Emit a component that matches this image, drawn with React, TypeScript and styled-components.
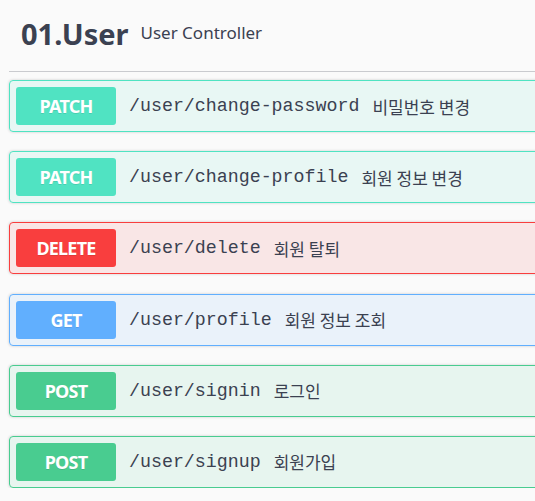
import React from "react";
import styled, { createGlobalStyle } from "styled-components";

const Global = createGlobalStyle`
  html, body {
    margin: 0;
    padding: 0;
    background: #fafafa;
    overflow: hidden;
  }
  body {
    font-family: "Noto Sans", "Noto Sans CJK KR", sans-serif;
    color: #3b4151;
  }
`;

type Method = "PATCH" | "DELETE" | "GET" | "POST";

const colors: Record<Method, string> = {
  PATCH: "#50e3c2",
  DELETE: "#f93e3e",
  GET: "#61affe",
  POST: "#49cc90",
};

const Page = styled.div`
  padding-left: 9px;
  width: 640px;
`;

const Header = styled.div`
  display: flex;
  align-items: center;
  height: 72px;
  box-sizing: border-box;
  padding: 0 0 4px 12px;
  border-bottom: 1px solid rgba(59, 65, 81, 0.25);
`;

const Title = styled.h3`
  margin: 0;
  font-family: "Noto Sans", sans-serif;
  font-size: 29px;
  font-weight: 700;
  line-height: 40px;
  color: #3b4151;
`;

const Subtitle = styled.small`
  margin: 0 0 3px 12px;
  font-family: "Noto Sans", sans-serif;
  font-size: 17px;
  color: #3b4151;
`;

const List = styled.div`
  display: flex;
  flex-direction: column;
  gap: 19.2px;
  padding-top: 8px;
`;

const Card = styled.div<{ $c: string }>`
  display: flex;
  align-items: center;
  box-sizing: border-box;
  height: 52px;
  padding: 6px;
  border: 1px solid ${(p) => p.$c};
  border-radius: 4px;
  background: ${(p) => p.$c}1a;
  box-shadow: 0 0 3px rgba(0, 0, 0, 0.19);
`;

const Badge = styled.span<{ $c: string }>`
  display: flex;
  align-items: center;
  justify-content: center;
  flex: 0 0 100px;
  height: 38px;
  border-radius: 3px;
  background: ${(p) => p.$c};
  color: #fff;
  font-family: "Noto Sans", sans-serif;
  font-weight: 700;
  font-size: 18px;
  letter-spacing: -0.8px;
  text-shadow: 0 1px 0 rgba(0, 0, 0, 0.1);
`;

const Path = styled.span`
  margin-left: 13px;
  font-family: "Liberation Mono", "DejaVu Sans Mono", monospace;
  font-size: 18.3px;
  color: #3b4151;
`;

const Desc = styled.span`
  margin-left: 13px;
  font-family: "Noto Sans CJK KR", "Noto Sans", sans-serif;
  font-size: 17px;
  color: #3b4151;
`;

const ops: { m: Method; path: string; desc: string }[] = [
  { m: "PATCH", path: "/user/change-password", desc: "비밀번호 변경" },
  { m: "PATCH", path: "/user/change-profile", desc: "회원 정보 변경" },
  { m: "DELETE", path: "/user/delete", desc: "회원 탈퇴" },
  { m: "GET", path: "/user/profile", desc: "회원 정보 조회" },
  { m: "POST", path: "/user/signin", desc: "로그인" },
  { m: "POST", path: "/user/signup", desc: "회원가입" },
];

export default function App() {
  return (
    <Page>
      <Global />
      <Header>
        <Title>01.User</Title>
        <Subtitle>User Controller</Subtitle>
      </Header>
      <List>
        {ops.map((o) => (
          <Card key={o.path} $c={colors[o.m]}>
            <Badge $c={colors[o.m]}>{o.m}</Badge>
            <Path>{o.path}</Path>
            <Desc>{o.desc}</Desc>
          </Card>
        ))}
      </List>
    </Page>
  );
}
